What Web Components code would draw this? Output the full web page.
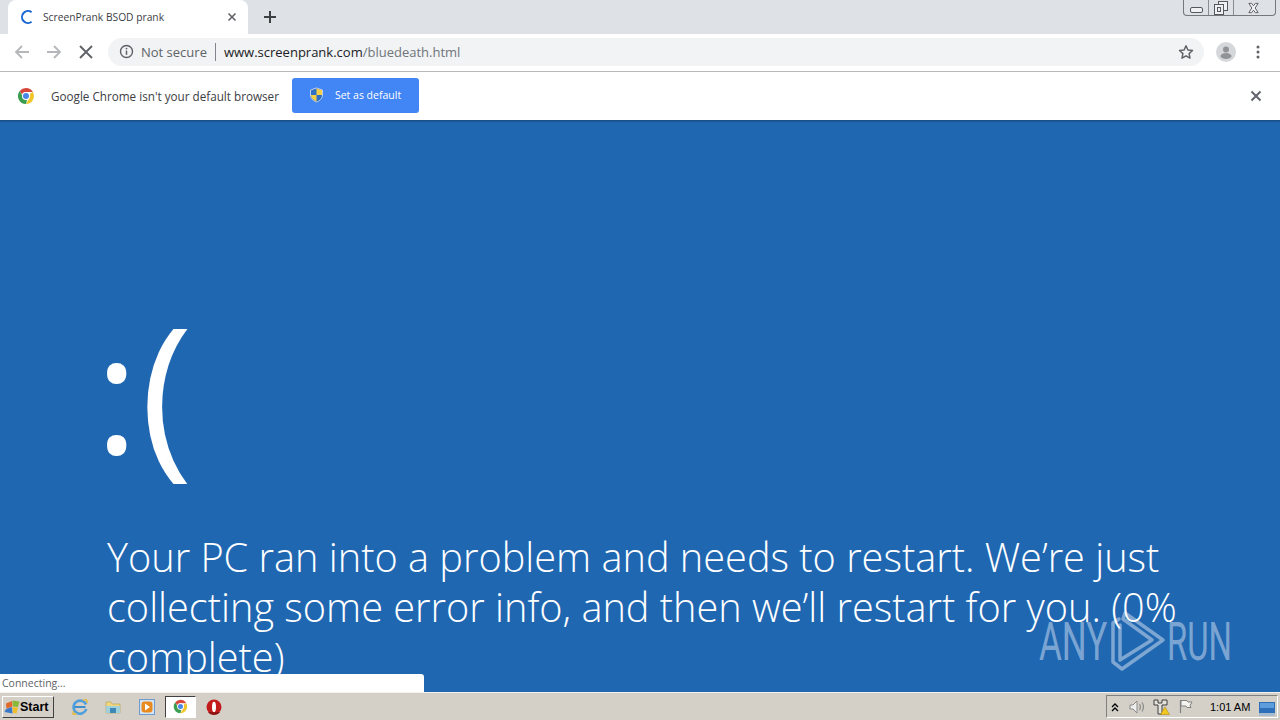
<!DOCTYPE html>
<html>
<head>
<meta charset="utf-8">
<title>ScreenPrank BSOD prank</title>
<style>
  html, body { margin: 0; height: 100%; overflow: hidden; }
  body { display: flex; flex-direction: column; width: 1280px; height: 720px; position: relative; font-family: "Open Sans", sans-serif; }
</style>
</head>
<body>
<tab-strip title-text="ScreenPrank BSOD prank"></tab-strip>
<nav-toolbar></nav-toolbar>
<default-infobar></default-infobar>
<bsod-page>Your PC ran into a problem and needs to restart. We’re just collecting some error info, and then we’ll restart for you. (0% complete)</bsod-page>
<win-taskbar></win-taskbar>
<status-bubble>Connecting...</status-bubble>
<run-watermark></run-watermark>

<script>
  // same chrome logo in the infobar and on the taskbar
  const chromeLogo = (size) => `
    <svg width="${size}" height="${size}" viewBox="0 0 18 18">
      <path d="M9 1a8 8 0 0 1 6.900 4H9a4 4 0 0 0-3.800 2.800L2.700 4A8 8 0 0 1 9 1z" fill="#d8483a"/>
      <path d="M15.900 5A8 8 0 0 1 9 17l3.400-5.900A4 4 0 0 0 12.500 7z" fill="#f0c62c"/>
      <path d="M9 17A8 8 0 0 1 2.700 4l3.400 6A4 4 0 0 0 10 12.900z" fill="#3c9c50"/>
      <circle cx="9" cy="9" r="4" fill="#fff"/>
      <circle cx="9" cy="9" r="3" fill="#4a86e8"/>
    </svg>`;

  class TabStrip extends HTMLElement {
    constructor() {
      super();
      this.attachShadow({ mode: 'open' });
      const title = this.getAttribute('title-text') || '';
      this.shadowRoot.innerHTML = `
        <style>
          :host { display: flex; flex: none; height: 34px; background: #dee1e6; box-sizing: border-box; padding: 0 0 0 8px; align-items: flex-end; }
          .tab { position: relative; width: 240px; height: 34px; background: #fff; border-radius: 8px 8px 0 0; display: flex; align-items: center; box-sizing: border-box; padding: 0 8px 0 12px; }
          .tab svg.spin { flex: none; margin-right: 7px; }
          .title { flex: 1; font-size: 10.250px; color: #3c4043; white-space: nowrap; padding-bottom: 1px; }
          .new { margin: 0 0 0 15px; align-self: center; display: flex; }
          .spacer { flex: 1; }
          .win { align-self: flex-start; display: flex; width: 93px; height: 16px; margin-right: 4px; border: 1px solid #74787d; border-top: none; border-radius: 0 0 4px 4px; box-sizing: border-box; }
          .win div { display: flex; align-items: center; justify-content: center; border-right: 1px solid #8a8e93; }
          .win div:nth-child(1) { width: 25px; padding-top: 5px; box-sizing: border-box; }
          .win div:nth-child(2) { width: 25px; box-sizing: border-box; }
          .win div:nth-child(3) { flex: 1; border-right: none; padding-right: 3px; }
        </style>
        <div class="tab">
          <svg class="spin" width="16" height="16" viewBox="0 0 16 16"><path d="M11.600 3.200A6 6 0 1 0 11.600 12.800" fill="none" stroke="#1a67d2" stroke-width="2"/></svg>
          <span class="title">${title}</span>
          <svg width="16" height="16" viewBox="0 0 16 16"><path d="M4.500 4.500l7 7M11.500 4.500l-7 7" stroke="#5f6368" stroke-width="1.600"/></svg>
        </div>
        <div class="new"><svg width="14" height="14" viewBox="0 0 14 14"><path d="M7 1v12M1 7h12" stroke="#3c4043" stroke-width="2"/></svg></div>
        <div class="spacer"></div>
        <div class="win">
          <div><svg width="13" height="6" viewBox="0 0 13 6"><rect x=".5" y=".5" width="12" height="5" rx="1.500" fill="#eef0f3" stroke="#55595e"/></svg></div>
          <div><svg width="14" height="14" viewBox="0 0 14 14" fill="#eef0f3" stroke="#55595e"><rect x="4.500" y=".5" width="9" height="9"/><rect x=".5" y="3.500" width="9" height="10"/><rect x="3.500" y="6.500" width="3" height="4"/></svg></div>
          <div><svg width="13" height="12" viewBox="0 0 14 12"><path d="M2 1h3l2 2.600L9 1h3L8.800 6 12 11H9L7 8.400 5 11H2L5.200 6z" fill="#eef0f3" stroke="#55595e"/></svg></div>
        </div>`;
    }
  }

  class NavToolbar extends HTMLElement {
    constructor() {
      super();
      this.attachShadow({ mode: 'open' });
      this.shadowRoot.innerHTML = `
        <style>
          :host { display: flex; flex: none; height: 38px; box-sizing: border-box; background: #fff; border-bottom: 1px solid #b9b9b9; align-items: center; padding: 0 0 2px 14px; }
          svg { flex: none; display: block; }
          .back { margin-right: 16px; }
          .stop { margin: 0 14px 0 16px; }
          .omni { flex: 1; height: 28px; background: #f1f3f4; border-radius: 14px; display: flex; align-items: center; padding: 0 10px 0 11px; margin-right: 12px; }
          .secure { font-size: 13px; color: #5f6368; margin-left: 7px; white-space: nowrap; }
          .sep { width: 1px; height: 18px; background: #80868b; margin: 0 8px; }
          .url { flex: 1; font-size: 13px; color: #202124; white-space: nowrap; }
          .url span { color: #70757a; }
          .avatar { margin-right: 20px; }
          .menu { margin-right: 20px; }
        </style>
        <svg class="back" width="16" height="16" viewBox="0 0 16 16"><path d="M15 8H2M8 2L2 8l6 6" fill="none" stroke="#b5b7ba" stroke-width="1.800"/></svg>
        <svg width="16" height="16" viewBox="0 0 16 16"><path d="M1 8h13M8 2l6 6-6 6" fill="none" stroke="#b5b7ba" stroke-width="1.800"/></svg>
        <svg class="stop" width="16" height="16" viewBox="0 0 16 16"><path d="M2 2l12 12M14 2L2 14" stroke="#5f6368" stroke-width="1.900"/></svg>
        <div class="omni">
          <svg width="15" height="15" viewBox="0 0 15 15"><circle cx="7.500" cy="7.500" r="6" fill="none" stroke="#5f6368" stroke-width="1.400"/><path d="M7.500 6.600v4.200" stroke="#5f6368" stroke-width="1.500"/><circle cx="7.500" cy="4.600" r=".9" fill="#5f6368"/></svg>
          <span class="secure">Not secure</span>
          <div class="sep"></div>
          <div class="url">www.screenprank.com<span>/bluedeath.html</span></div>
          <svg width="16" height="16" viewBox="0 0 16 16"><path d="M8 1.800l1.900 4.200 4.600.5-3.400 3.100.9 4.500L8 11.800l-4 2.300.9-4.500L1.500 6.500 6.100 6z" fill="none" stroke="#5f6368" stroke-width="1.500" stroke-linejoin="round"/></svg>
        </div>
        <svg class="avatar" width="20" height="20" viewBox="0 0 20 20"><circle cx="10" cy="10" r="10" fill="#d5d7da"/><circle cx="10" cy="7.500" r="3" fill="#909498"/><ellipse cx="10" cy="14" rx="5.500" ry="3" fill="#909498"/></svg>
        <svg class="menu" width="4" height="14" viewBox="0 0 4 14" fill="#5f6368"><circle cx="2" cy="2" r="1.500"/><circle cx="2" cy="7" r="1.500"/><circle cx="2" cy="12" r="1.500"/></svg>`;
    }
  }

  class DefaultInfobar extends HTMLElement {
    constructor() {
      super();
      this.attachShadow({ mode: 'open' });
      this.shadowRoot.innerHTML = `
        <style>
          :host { display: flex; flex: none; height: 48px; box-sizing: border-box; background: #fff; align-items: center; padding: 0 18px 1px 17px; }
          .msg { font-size: 11.700px; color: #3c4043; margin-left: 16px; white-space: nowrap; }
          button { all: unset; box-sizing: border-box; width: 127px; height: 35px; margin-left: 13px; background: #4285f4; border-radius: 3px; display: flex; align-items: center; padding: 0 0 2px 17px; color: #fff; font-size: 10.500px; }
          button svg { margin-right: 11px; }
          .spacer { flex: 1; }
        </style>
        ${chromeLogo(18)}
        <span class="msg">Google Chrome isn't your default browser</span>
        <button>
          <svg width="15" height="16" viewBox="0 0 15 16"><path d="M7.500 1l6 2v5c0 3.500-3 6-6 7-3-1-6-3.500-6-7V3z" fill="#2f6fc4" stroke="#dfe6f0" stroke-width=".8"/><path d="M7.500 1.500l5.500 1.800V8H7.500zM7.500 8v6.500C5 13.500 2 11.300 2 8z" fill="#f5cf45"/></svg>
          <span>Set as default</span>
        </button>
        <div class="spacer"></div>
        <svg width="12" height="12" viewBox="0 0 12 12"><path d="M1.500 1.500l9 9M10.500 1.500l-9 9" stroke="#5f6368" stroke-width="1.900"/></svg>`;
    }
  }

  class BsodPage extends HTMLElement {
    constructor() {
      super();
      this.attachShadow({ mode: 'open' });
      this.shadowRoot.innerHTML = `
        <style>
          :host { display: block; flex: 1; min-height: 0; overflow: hidden; background: #2067b2; color: #fff; box-sizing: border-box; padding: 182px 90px 0 107px; box-shadow: inset 0 3px 3px -2px rgba(0,0,0,.35); font-family: "Open Sans", sans-serif; font-weight: 300; }
          .face { display: flex; align-items: flex-start; height: 200px; font-weight: 400; }
          .colon { font-size: 165px; line-height: 165px; margin: 6px 0 0 -12px; }
          .paren { font-size: 178px; line-height: 178px; margin: -4px 0 0 2px; }
          .text { font-size: 39.700px; line-height: 50px; margin-top: 30px; }
        </style>
        <div class="face"><span class="colon">:</span><span class="paren">(</span></div>
        <div class="text"><slot></slot></div>`;
    }
  }

  class WinTaskbar extends HTMLElement {
    constructor() {
      super();
      this.attachShadow({ mode: 'open' });
      this.shadowRoot.innerHTML = `
        <style>
          :host { display: flex; flex: none; height: 28px; box-sizing: border-box; background: #d4d0c8; border-top: 1px solid #f4f2ee; align-items: center; font-family: "Liberation Sans", sans-serif; color: #000; }
          .start { width: 52px; height: 22px; margin-left: 2px; box-sizing: border-box; background: #d4d0c8; border: 1px solid; border-color: #fff #404040 #404040 #fff; display: flex; align-items: center; font-weight: bold; font-size: 12.500px; padding-left: 1px; gap: 0; }
          .start svg { margin-right: -1px; }
          .icons { display: flex; align-items: center; margin-left: 9px; }
          .icons svg { display: block; }
          .slot { width: 33px; display: flex; justify-content: center; }
          .media svg { margin-left: 2px; }
          .active { width: 31px; height: 22px; align-items: center; background: #fff; border: 1px solid; border-color: #404040 #fff #fff #404040; box-sizing: border-box; margin: 0 1px 0 3px; }
          .spacer { flex: 1; }
          .tray { height: 23px; width: 172px; box-sizing: border-box; border: 1px solid; border-color: #808080 #fff #fff #808080; margin-right: 2px; display: flex; align-items: center; padding-left: 3px; font-size: 11px; }
          .tray svg { display: block; flex: none; }
          .clock { margin: 0 9px 0 16px; white-space: nowrap; }
        </style>
        <div class="start">
          <svg width="17" height="16" viewBox="0 0 17 16"><path d="M2 4.500L8 2l.5 5.500-6 2z" fill="#e2672b"/><path d="M8.500 1.500l7 1-1.500 5.500-5-.5z" fill="#8ab83a"/><path d="M2 10l6-2 .5 6.500L.5 13z" fill="#3c78c8"/><path d="M8.500 8l5.500.5-1.500 6-3.500-.5z" fill="#f0bd2a"/></svg>
          <span>Start</span>
        </div>
        <div class="icons">
          <div class="slot"><svg width="18" height="18" viewBox="0 0 18 18"><path d="M15.300 11A6.500 6.500 0 1 1 15 6.500" fill="none" stroke="#4f9fdc" stroke-width="2.600"/><path d="M3.500 9h11" stroke="#3f8fcf" stroke-width="2"/><path d="M2.500 13Q0 18 5.500 15.500M12 2.500q5-2.500 4 2.500" fill="none" stroke="#e5b73b" stroke-width="1.400"/></svg></div>
          <div class="slot"><svg width="16" height="15" viewBox="0 0 16 15"><path d="M1 3h5l1 2h8v9H1z" fill="#f0d77e" stroke="#b39b4c" stroke-width=".6"/><path d="M1 7h14v7H1z" fill="#9fd0dc"/><rect x="5" y="9" width="6" height="5" fill="#3d88b6"/></svg></div>
          <div class="slot media"><svg width="16" height="16" viewBox="0 0 16 16"><rect x=".5" y=".5" width="15" height="15" fill="#d5e4f3" stroke="#6f9cce"/><rect x="2.500" y="2.500" width="11" height="11" rx="3" fill="#e98a1f"/><path d="M6 4.500l5 3.500-5 3.500z" fill="#fff"/></svg></div>
          <div class="slot active">${chromeLogo(15)}</div>
          <div class="slot"><svg width="16" height="16" viewBox="0 0 16 16"><circle cx="8" cy="8" r="7.500" fill="#c31a1a"/><path d="M2 13a7.500 7.500 0 0 0 12 0z" fill="#8f1212"/><ellipse cx="8" cy="8" rx="2" ry="5.200" fill="#fff"/></svg></div>
        </div>
        <div class="spacer"></div>
        <div class="tray">
          <svg width="10" height="10" viewBox="0 0 10 10"><path d="M2 5l3-3 3 3M2 9l3-3 3 3" fill="none" stroke="#000" stroke-width="1.300"/></svg>
          <svg width="16" height="16" viewBox="0 0 16 16" style="margin-left:9px"><path d="M1 6h3l4-4v12l-4-4H1z" fill="#efefef" stroke="#8a8a8a"/><path d="M10.500 5q1.800 3 0 6M13 3.500q3 4.500 0 9" fill="none" stroke="#8a8a8a" stroke-width="1.200"/></svg>
          <svg width="17" height="16" viewBox="0 0 17 16" style="margin-left:8px"><path d="M1 1h4v3h4V1h5v5H9v9H5V6H1z" fill="#e4e2dc" stroke="#3f3f3f" stroke-width="1"/><path d="M12 8l4.500 7.500h-9z" fill="#f2c81e" stroke="#a88a10" stroke-width=".6"/></svg>
          <svg width="16" height="15" viewBox="0 0 16 15" style="margin-left:8px"><path d="M2.500 1v13" stroke="#808080" stroke-width="1.200"/><path d="M3 1.500h6l1 1.500h4l-2 3.500 1 2H9L8 7H3z" fill="#f6f4ef" stroke="#808080"/></svg>
          <span class="clock">1:01 AM</span>
          <svg width="16" height="14" viewBox="0 0 16 14" style="margin-top:4px"><rect width="16" height="12" fill="#2d6fb8"/><rect x="1" y="1" width="14" height="5" fill="#5e9ddc"/><rect y="11" width="16" height="3" fill="#a9bccf"/></svg>
        </div>`;
    }
  }

  class StatusBubble extends HTMLElement {
    constructor() {
      super();
      this.attachShadow({ mode: 'open' });
      this.shadowRoot.innerHTML = `
        <style>
          :host { position: absolute; left: 0; bottom: 28px; width: 424px; height: 18px; box-sizing: border-box; background: #fff; border-radius: 0 3px 0 0; padding: 1px 0 0 2px; font-size: 10.500px; color: #5f6368; line-height: 16px; white-space: nowrap; }
        </style>
        <slot></slot>`;
    }
  }

  class RunWatermark extends HTMLElement {
    constructor() {
      super();
      this.attachShadow({ mode: 'open' });
      this.shadowRoot.innerHTML = `
        <style>
          :host { position: absolute; left: 1039px; top: 610px; display: flex; align-items: center; color: rgba(255,255,255,.42); font-family: "Roboto", sans-serif; font-size: 53px; line-height: 62px; height: 62px; font-weight: 400; }
          span { display: block; transform-origin: left center; white-space: nowrap; margin-top: 2px; }
          .any { transform: scaleX(.66); width: 64px; }
          .run { transform: scaleX(.62); width: 64px; margin-left: 1px; }
          svg { display: block; flex: none; margin-left: 7px; }
        </style>
        <span class="any">ANY</span>
        <svg width="56" height="62" viewBox="0 0 56 62" fill="none" stroke="rgba(255,255,255,.42)" stroke-width="3.500" stroke-linejoin="round" stroke-linecap="round"><path d="M9 9L3 13V52L12 59L53 30L15 3L13 9L42 30L10 50V15"/></svg>
        <span class="run">RUN</span>`;
    }
  }

  customElements.define('tab-strip', TabStrip);
  customElements.define('nav-toolbar', NavToolbar);
  customElements.define('default-infobar', DefaultInfobar);
  customElements.define('bsod-page', BsodPage);
  customElements.define('win-taskbar', WinTaskbar);
  customElements.define('status-bubble', StatusBubble);
  customElements.define('run-watermark', RunWatermark);
</script>
</body>
</html>
